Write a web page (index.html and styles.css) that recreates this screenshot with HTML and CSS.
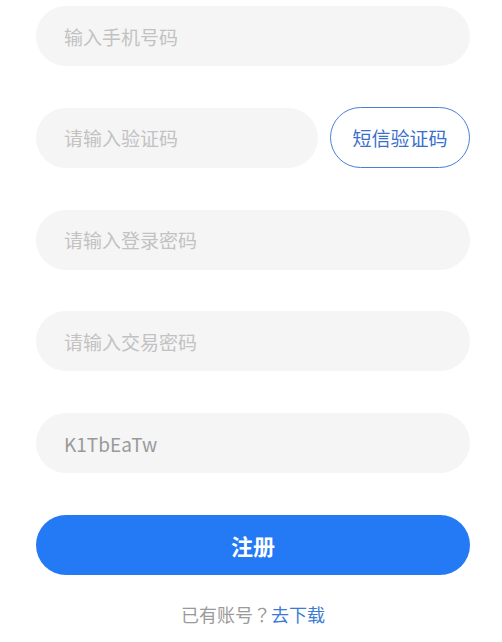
FILE: index.html
```html
<!DOCTYPE html>
<html lang="zh-CN">
<head>
<meta charset="utf-8">
<title>注册</title>
<link rel="stylesheet" href="styles.css">
</head>
<body>
<main class="form">
  <div class="field"><input class="input" type="text" placeholder="输入手机号码"></div>
  <div class="field row">
    <input class="input code" type="text" placeholder="请输入验证码">
    <button class="sms" type="button">短信验证码</button>
  </div>
  <div class="field"><input class="input" type="password" placeholder="请输入登录密码"></div>
  <div class="field"><input class="input" type="password" placeholder="请输入交易密码"></div>
  <div class="field"><input class="input filled" type="text" value="K1TbEaTw"></div>
  <button class="submit" type="button">注册</button>
  <p class="footer">已有账号<span class="qmark" lang="zh-TW">？</span><a class="link" href="#">去下载</a></p>
</main>
</body>
</html>
```
FILE: styles.css
```css
* { box-sizing: border-box; }
html, body {
  margin: 0;
  padding: 0;
  background: #ffffff;
  font-family: "Noto Sans CJK SC", "Noto Sans", sans-serif;
}
.form {
  display: flex;
  flex-direction: column;
  gap: 41.8px;
  padding: 6px 32px 0 36px;
}
.field {
  display: flex;
  height: 60px;
}
.row { gap: 12px; }
.input {
  flex: 1;
  min-width: 0;
  height: 60px;
  border: none;
  outline: none;
  border-radius: 30px;
  background: #f5f5f5;
  padding: 0 28px;
  font-family: inherit;
  font-size: 19px;
  color: #9a9a9a;
}
.input::placeholder { color: #c2c2c2; }
.code { flex: 0 0 282px; }
.sms {
  flex: 1;
  height: 61px;
  margin-top: -1px;
  border: 1px solid #4a7fd6;
  border-radius: 31px;
  background: #ffffff;
  color: #3b6fcc;
  font-family: inherit;
  font-size: 19px;
  padding: 0;
}
.submit {
  height: 60px;
  border: none;
  border-radius: 30px;
  background: #2479f4;
  color: #ffffff;
  font-family: inherit;
  font-size: 22px;
  font-weight: 700;
}
.footer {
  margin: -15px 0 0;
  text-align: center;
  font-size: 18px;
  line-height: 24px;
  color: #9a9a9a;
}
.qmark {
  font-family: "Noto Sans CJK TC", "Noto Sans CJK SC", sans-serif;
}
.link {
  color: #3a7bd5;
  text-decoration: none;
}
```
